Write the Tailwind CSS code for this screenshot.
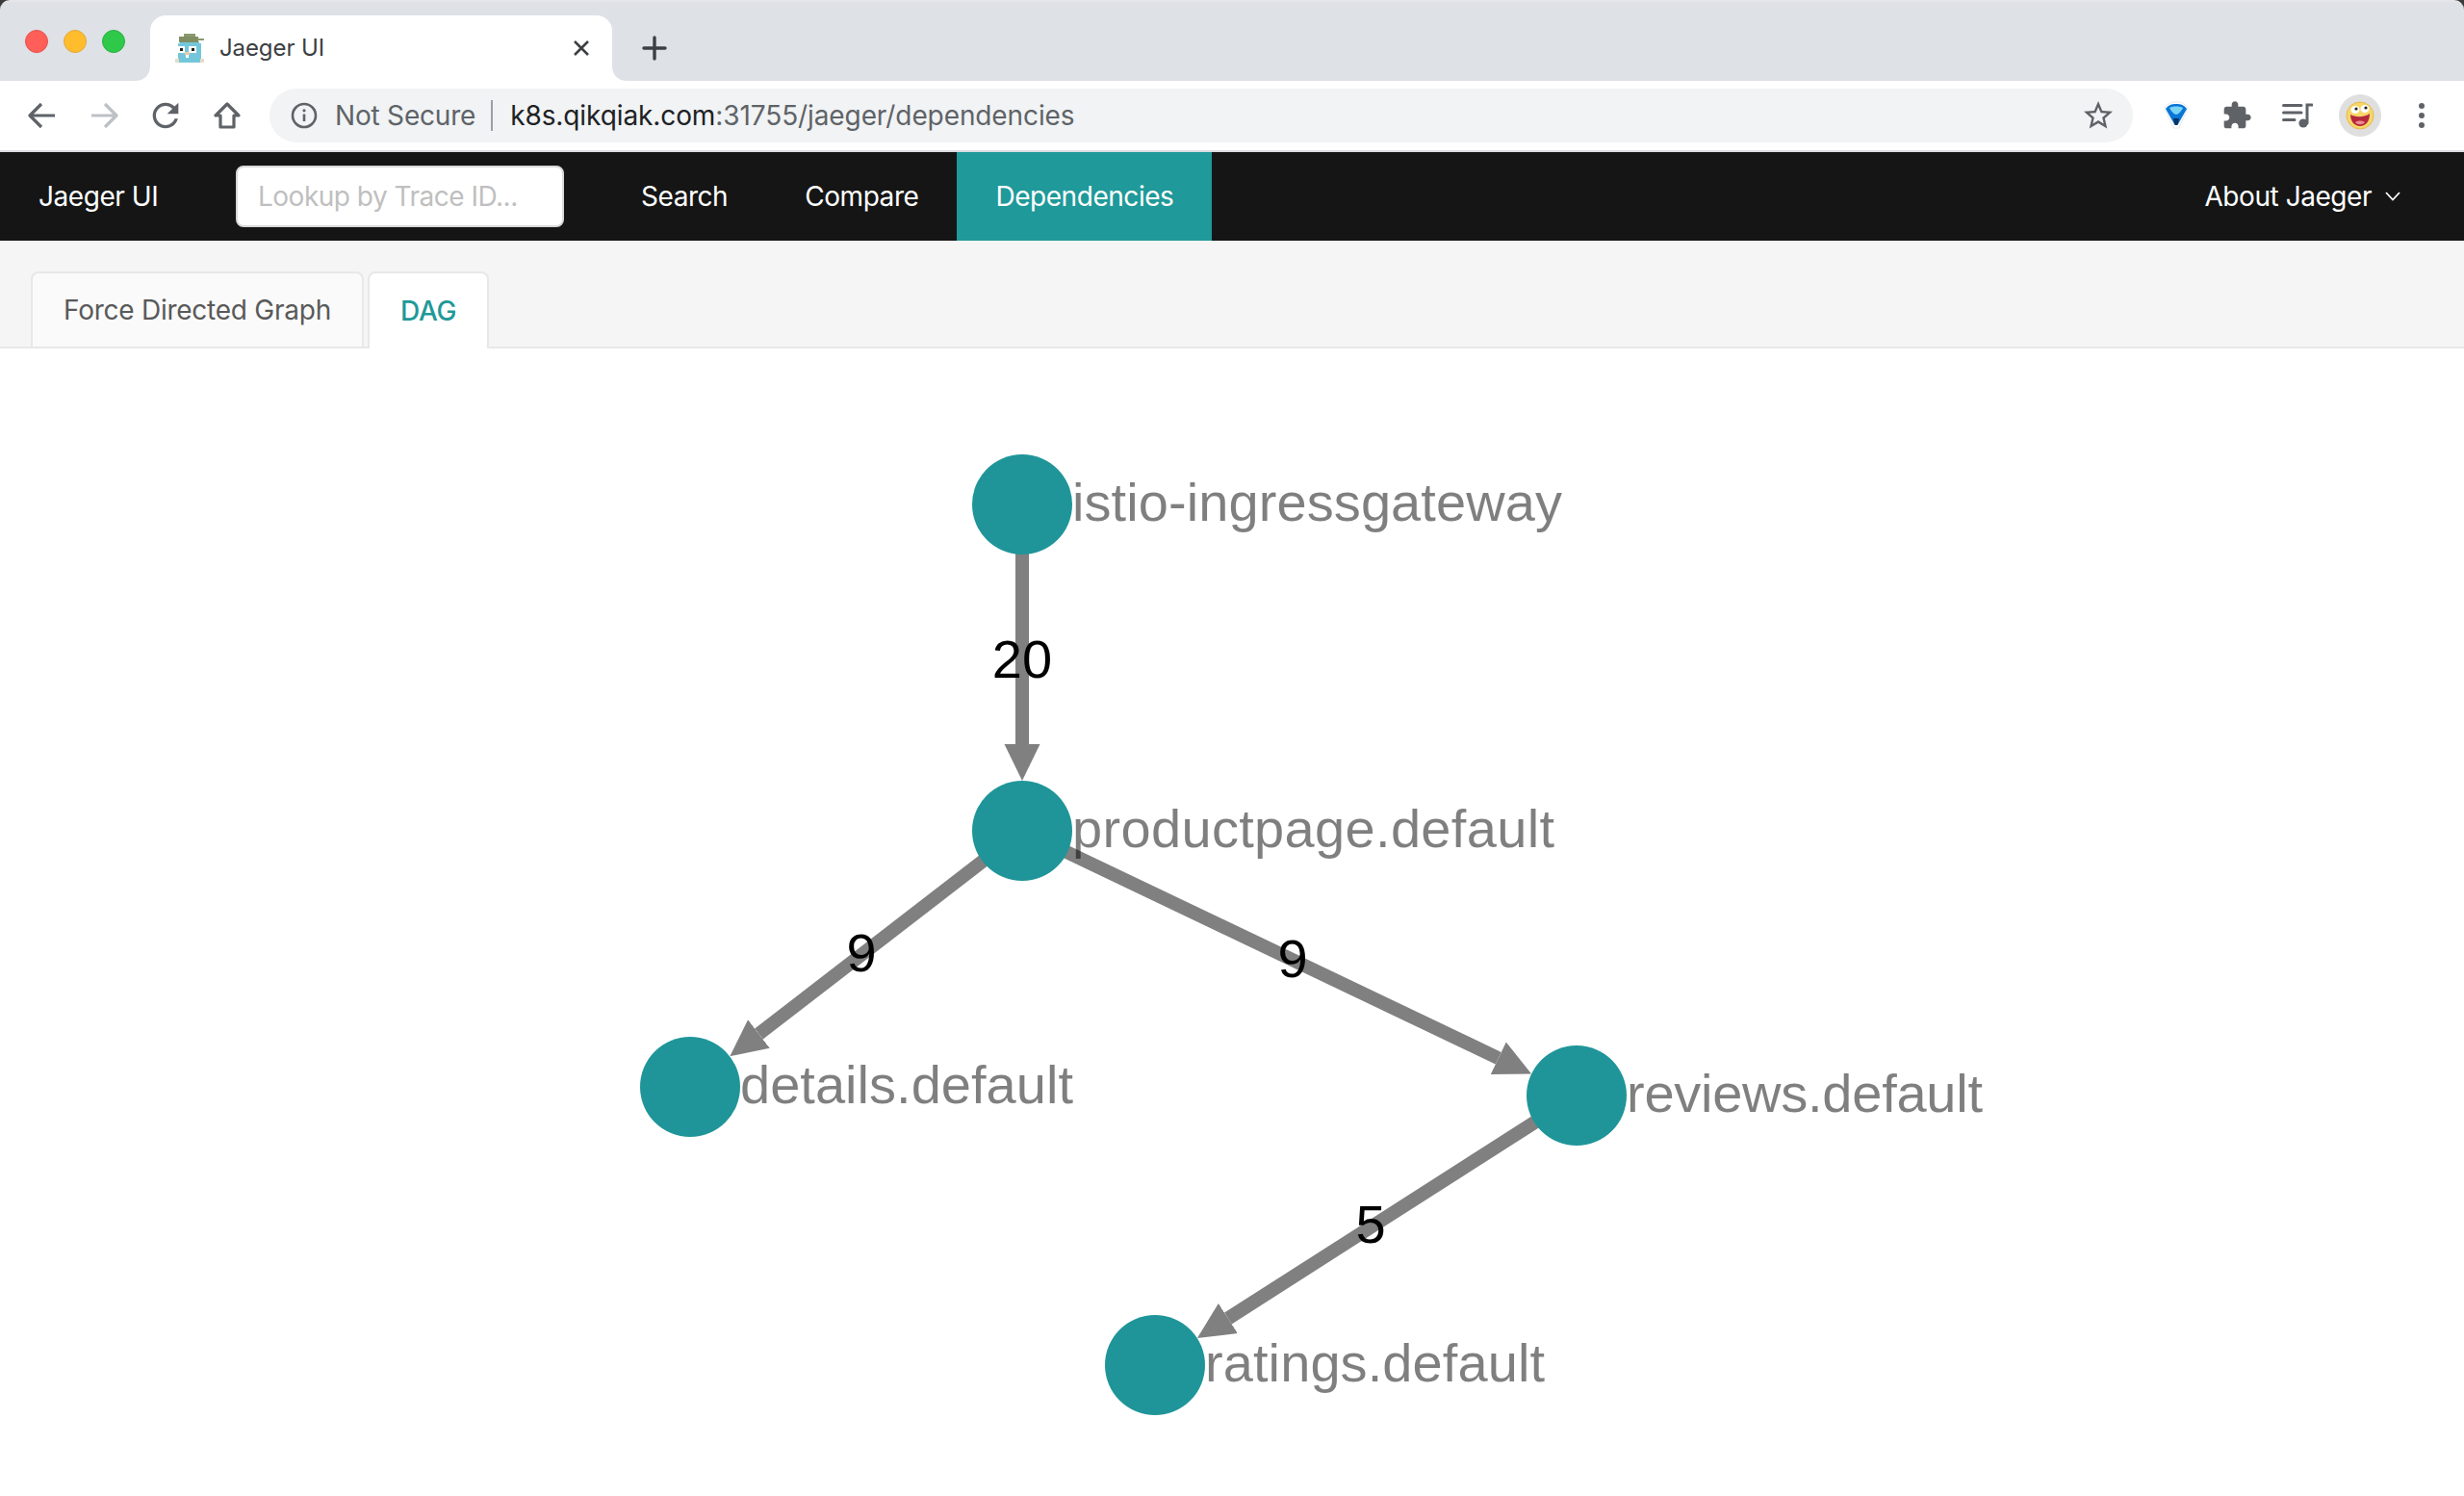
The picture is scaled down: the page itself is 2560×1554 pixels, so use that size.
<!DOCTYPE html>
<html lang="en">
<head>
    <meta charset="UTF-8">
    <title>Jaeger UI</title>
    <script src="https://cdn.jsdelivr.net/npm/@tailwindcss/browser@4"></script>
</head>
<body class="w-[2560px] h-[1554px] overflow-hidden bg-white font-['Inter',sans-serif] flex flex-col">
    <!-- Browser tab strip -->
    <div class="bg-[#3a3a3a] shrink-0">
        <div class="h-[84px] bg-[#dee1e6] rounded-t-[10px] border-t-2 border-[#e4e6ea] flex items-end relative">
            <div class="absolute left-[26px] top-[29px] flex gap-[16px]">
                <span class="w-[24px] h-[24px] rounded-full bg-[#ff5f58] border border-[#e5534d]"></span>
                <span class="w-[24px] h-[24px] rounded-full bg-[#ffbd2e] border border-[#e5a73a]"></span>
                <span class="w-[24px] h-[24px] rounded-full bg-[#2fc94a] border border-[#2bb042]"></span>
            </div>
            <div class="ml-[156px] w-[480px] h-[68px] bg-white rounded-t-[16px] flex items-center pl-[25px] pr-[22px] relative">
                <svg class="absolute left-[-16px] bottom-0" width="16" height="16" viewBox="0 0 16 16"><path d="M16 0V16H0C10 16 16 10 16 0Z" fill="#fff"/></svg>
                <svg class="absolute right-[-16px] bottom-0" width="16" height="16" viewBox="0 0 16 16"><path d="M0 0V16H16C6 16 0 10 0 0Z" fill="#fff"/></svg>
                <!-- pixel gopher favicon -->
                <svg width="32" height="32" viewBox="0 0 32 32" class="shrink-0" shape-rendering="crispEdges">
                    <rect x="4" y="11" width="24" height="20" fill="#74c7db"/>
                    <rect x="6" y="9" width="20" height="3" fill="#74c7db"/>
                    <rect x="10" y="1" width="12" height="4" fill="#8a9a6f"/>
                    <rect x="5" y="4" width="20" height="6" fill="#7f8f63"/>
                    <rect x="24" y="6" width="7" height="2" fill="#8a9a6f"/>
                    <rect x="3" y="14" width="8" height="7" fill="#fff"/>
                    <rect x="15" y="14" width="8" height="7" fill="#fff"/>
                    <rect x="6" y="16" width="3" height="3" fill="#222"/>
                    <rect x="18" y="16" width="3" height="3" fill="#222"/>
                    <rect x="11" y="20" width="5" height="3" fill="#e8c9a8"/>
                    <rect x="12" y="23" width="3" height="3" fill="#fff"/>
                    <rect x="1" y="27" width="4" height="4" fill="#e8dcc8"/>
                    <rect x="27" y="27" width="4" height="4" fill="#e8dcc8"/>
                </svg>
                <span class="ml-[15px] text-[24px] text-[#3c4043] leading-none tracking-[-0.1px]">Jaeger UI</span>
                <svg class="ml-auto" width="20" height="20" viewBox="0 0 20 20"><path d="M3 3L17 17M17 3L3 17" stroke="#3c4043" stroke-width="2.6" fill="none"/></svg>
            </div>
            <div class="ml-[30px] h-[68px] flex items-center">
                <svg width="28" height="28" viewBox="0 0 28 28"><path d="M14 3V25M3 14H25" stroke="#3c4043" stroke-width="3.4" stroke-linecap="round" fill="none"/></svg>
            </div>
        </div>
    </div>

    <!-- Browser toolbar -->
    <div class="h-[72px] shrink-0 bg-white flex items-center pl-[12px]">
        <div class="w-[64px] flex justify-center">
            <svg width="30" height="28" viewBox="0 0 30 28"><path d="M28 14H3M14 2L2 14L14 26" stroke="#5f6368" stroke-width="3.2" fill="none" stroke-linejoin="round"/></svg>
        </div>
        <div class="w-[64px] flex justify-center">
            <svg width="30" height="28" viewBox="0 0 30 28"><path d="M2 14H27M16 2L28 14L16 26" stroke="#bdc1c6" stroke-width="3.2" fill="none" stroke-linejoin="round"/></svg>
        </div>
        <div class="w-[64px] flex justify-center">
            <svg width="40" height="40" viewBox="0 0 24 24"><path fill="#5f6368" d="M17.65 6.35C16.2 4.9 14.21 4 12 4c-4.42 0-7.99 3.58-7.99 8s3.57 8 7.99 8c3.73 0 6.84-2.55 7.73-6h-2.08c-.82 2.33-3.04 4-5.65 4-3.31 0-6-2.69-6-6s2.69-6 6-6c1.66 0 3.14.69 4.22 1.78L13 11h7V4l-2.35 2.35z"/></svg>
        </div>
        <div class="w-[64px] flex justify-center">
            <svg width="30" height="28" viewBox="0 0 30 28"><path d="M15 2L3 14H8V26H22V14H27Z" stroke="#5f6368" stroke-width="3.2" fill="none" stroke-linejoin="round"/></svg>
        </div>
        <!-- Omnibox -->
        <div class="ml-[12px] w-[1936px] h-[56px] rounded-full bg-[#f1f3f4] flex items-center pl-[22px] pr-[18px]">
            <svg width="28" height="28" viewBox="0 0 28 28"><circle cx="14" cy="14" r="12" stroke="#5f6368" stroke-width="2.6" fill="none"/><path d="M14 12.5V20" stroke="#5f6368" stroke-width="2.6"/><circle cx="14" cy="8.8" r="1.6" fill="#5f6368"/></svg>
            <span class="ml-[18px] text-[28px] text-[#5f6368] leading-none tracking-[-0.2px]">Not Secure</span>
            <span class="ml-[16px] w-[2px] h-[32px] bg-[#9aa0a6]"></span>
            <span class="ml-[18px] text-[28px] leading-none tracking-[-0.1px] text-[#202124]">k8s.qikqiak.com<span class="text-[#5f6368]">:31755/jaeger/dependencies</span></span>
            <svg class="ml-auto" width="36" height="36" viewBox="0 0 24 24"><path fill="#5f6368" d="M22 9.24l-7.19-.62L12 2 9.19 8.63 2 9.24l5.46 4.73L5.82 21 12 17.27 18.18 21l-1.63-7.03L22 9.24zM12 15.4l-3.76 2.27 1-4.28-3.32-2.88 4.38-.38L12 6.1l1.71 4.04 4.38.38-3.32 2.88 1 4.28L12 15.4z"/></svg>
        </div>
        <!-- Extensions -->
        <div class="ml-[14px] w-[62px] flex justify-center">
            <svg width="32" height="32" viewBox="0 0 32 32"><path d="M4 8C8 3 11 2 16 2C21 2 24 3 28 8L19 29H13Z" fill="#fff" stroke="#e4e8ec" stroke-width="1"/><path d="M5 9C8 5 11 4 16 4C21 4 24 5 27 9L18 25H14Z" fill="#0a76d6"/><path d="M9 8C12 6 20 6 23 8C21 12 18 15 16 15C14 15 11 12 9 8Z" fill="#7ad4f5"/><path d="M13 19L19 19L17.5 26H14.5Z" fill="#07315f"/></svg>
        </div>
        <div class="w-[63px] flex justify-center">
            <svg width="32" height="32" viewBox="0 0 24 24"><path fill="#5f6368" d="M20.5 11H19V7c0-1.1-.9-2-2-2h-4V3.5C13 2.12 11.88 1 10.5 1S8 2.12 8 3.5V5H4c-1.1 0-1.99.9-1.99 2v3.8H3.5c1.49 0 2.7 1.21 2.7 2.7s-1.21 2.7-2.7 2.7H2V20c0 1.1.9 2 2 2h3.8v-1.5c0-1.49 1.21-2.7 2.7-2.7 1.49 0 2.7 1.21 2.7 2.7V22H17c1.1 0 2-.9 2-2v-4h1.5c1.38 0 2.5-1.12 2.5-2.5S21.88 11 20.5 11z"/></svg>
        </div>
        <div class="w-[64px] flex justify-center">
            <svg width="32" height="26" viewBox="0 0 32 26"><path d="M1.5 2.5H20M1.5 10H20M1.5 17.5H13" stroke="#5f6368" stroke-width="3" stroke-linecap="round"/><path d="M26 21V2H31" stroke="#5f6368" stroke-width="3" fill="none" stroke-linecap="round"/><circle cx="22" cy="21" r="4.6" fill="#5f6368"/></svg>
        </div>
        <div class="w-[66px] flex justify-center">
            <div class="w-[44px] h-[44px] rounded-full bg-[#dfdfdf] flex items-center justify-center">
                <svg width="30" height="30" viewBox="0 0 30 30"><circle cx="15" cy="15" r="14" fill="#f7d768" stroke="#e8b850"/><ellipse cx="10" cy="9" rx="4.5" ry="4" fill="#fff"/><ellipse cx="20" cy="8" rx="4.5" ry="4" fill="#fff"/><circle cx="11" cy="8" r="1.6" fill="#222"/><circle cx="21" cy="7" r="1.6" fill="#222"/><path d="M5 14C10 17 20 17 25 13C25 21 21 26 15 26C9 26 5 21 5 14Z" fill="#b5283c"/><path d="M10 22C12 20 18 20 20 22C18 25 12 25 10 22Z" fill="#ee8a92"/></svg>
            </div>
        </div>
        <div class="w-[61px] flex flex-col items-center gap-[4px]">
            <span class="w-[6px] h-[6px] rounded-full bg-[#5f6368]"></span>
            <span class="w-[6px] h-[6px] rounded-full bg-[#5f6368]"></span>
            <span class="w-[6px] h-[6px] rounded-full bg-[#5f6368]"></span>
        </div>
    </div>
    <div class="h-[2px] shrink-0 bg-[#dadce0]"></div>

    <!-- Jaeger top nav -->
    <nav class="h-[92px] shrink-0 bg-[#151515] flex items-stretch text-white text-[28px] tracking-[-0.45px]">
        <div class="pl-[40px] w-[245px] flex items-center">Jaeger UI</div>
        <div class="flex items-center">
            <input class="w-[341px] h-[64px] bg-white rounded-[8px] border-2 border-[#d9d9d9] px-[21px] text-[28px] tracking-[-0.5px] placeholder:text-[#bfbfbf] outline-none" placeholder="Lookup by Trace ID...">
        </div>
        <a class="ml-[40px] px-[40px] flex items-center">Search</a>
        <a class="px-[40px] flex items-center">Compare</a>
        <a class="px-[40px] flex items-center bg-[#1f9999]">Dependencies</a>
        <a class="ml-auto pr-[66px] flex items-center">
            About Jaeger
            <svg class="ml-[14px]" width="16" height="10" viewBox="0 0 16 10"><path d="M1 1L8 8.5L15 1" stroke="#fff" stroke-width="1.8" fill="none"/></svg>
        </a>
    </nav>

    <!-- Graph type tabs -->
    <div class="h-[112px] shrink-0 bg-[#f5f5f5] border-b-2 border-[#e8e8e8] pl-[32px] flex items-end gap-[4px] text-[28px] tracking-[-0.25px]">
        <div class="h-[78px] px-[32px] flex items-center bg-[#fafafa] border-2 border-b-0 border-[#e8e8e8] rounded-t-[8px] text-[#595959]">Force Directed Graph</div>
        <div class="h-[80px] -mb-[2px] px-[32px] flex items-center bg-white border-2 border-b-0 border-[#e8e8e8] rounded-t-[8px] text-[#1f9999] font-medium">DAG</div>
    </div>

    <!-- DAG, viewBox keeps full page coordinates -->
    <svg class="block shrink-0" width="2560" height="1192" viewBox="0 362 2560 1192" font-family="'Liberation Sans', Arial, sans-serif" font-size="56">
        <defs>
            <marker id="arrow" markerUnits="userSpaceOnUse" markerWidth="38" markerHeight="38" refX="0" refY="19" orient="auto">
                <path d="M0 0.5L38 19L0 37.5Z" fill="#808080"/>
            </marker>
        </defs>
        <g stroke="#808080" stroke-width="14">
            <line x1="1062" y1="524" x2="1062" y2="773" marker-end="url(#arrow)"/>
            <line x1="1062" y1="863" x2="788.4" y2="1074" marker-end="url(#arrow)"/>
            <line x1="1062" y1="863" x2="1556.8" y2="1099.2" marker-end="url(#arrow)"/>
            <line x1="1638" y1="1138" x2="1275.9" y2="1369.5" marker-end="url(#arrow)"/>
        </g>
        <g fill="#1f9599">
            <circle cx="1062" cy="524" r="52"/>
            <circle cx="1062" cy="863" r="52"/>
            <circle cx="717" cy="1129" r="52"/>
            <circle cx="1638" cy="1138" r="52"/>
            <circle cx="1200" cy="1418" r="52"/>
        </g>
        <g fill="#000" fill-opacity="0.5">
            <text x="1114" y="541" textLength="509">istio-ingressgateway</text>
            <text x="1114" y="880" textLength="501">productpage.default</text>
            <text x="769" y="1146" textLength="346">details.default</text>
            <text x="1690" y="1155" textLength="370">reviews.default</text>
            <text x="1252" y="1435" textLength="353">ratings.default</text>
        </g>
        <g fill="#000" text-anchor="middle">
            <text x="1062" y="704">20</text>
            <text x="895" y="1009">9</text>
            <text x="1343" y="1015">9</text>
            <text x="1424" y="1291">5</text>
        </g>
    </svg>
</body>
</html>
